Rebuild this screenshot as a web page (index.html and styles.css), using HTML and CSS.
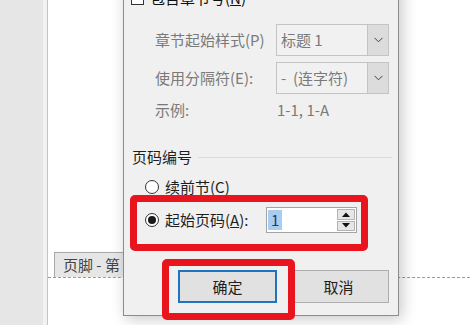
FILE: index.html
```html
<!DOCTYPE html>
<html lang="zh-CN">
<head>
  <meta charset="UTF-8">
  <meta name="viewport" content="width=device-width, initial-scale=1.0">
  <title>页码格式</title>
  <link rel="stylesheet" href="styles.css">
</head>
<body>
  <div class="desk">
    <div class="gutter"></div>
    <div class="gutter-edge"></div>
    <div class="page">
      <div class="footer-area">
        <div class="footer-tag">页脚 - 第 1 节 -</div>
      </div>
    </div>
  </div>

  <div class="dialog">
    <div class="check-row">
      <span class="checkbox"></span>
      <span>包含章节号(<u>N</u>)</span>
    </div>

    <div class="field-row">
      <span class="label">章节起始样式(P)</span>
      <div class="combo">
        <span class="combo-text">标题 1</span>
        <span class="combo-btn">
          <svg width="9" height="6" viewBox="0 0 9 6"><polyline points="0.5,0.8 4.5,4.8 8.5,0.8" fill="none" stroke="#444" stroke-width="1"/></svg>
        </span>
      </div>
    </div>

    <div class="field-row">
      <span class="label">使用分隔符(E):</span>
      <div class="combo">
        <span class="combo-text">-&nbsp;&nbsp;(连字符)</span>
        <span class="combo-btn">
          <svg width="9" height="6" viewBox="0 0 9 6"><polyline points="0.5,0.8 4.5,4.8 8.5,0.8" fill="none" stroke="#444" stroke-width="1"/></svg>
        </span>
      </div>
    </div>

    <div class="example-row">
      <span class="label">示例:</span>
      <span class="example-value">1-1, 1-A</span>
    </div>

    <div class="group-title">
      <span>页码编号</span>
      <span class="group-line"></span>
    </div>

    <div class="radio-row">
      <span class="radio"></span>
      <span>续前节(C)</span>
    </div>

    <div class="radio-row start-row">
      <span class="radio checked"></span>
      <span class="start-label">起始页码(<u>A</u>):</span>
      <div class="spinner">
        <span class="spin-value"><span class="selected">1</span></span>
        <span class="spin-btns">
          <span class="spin-btn">
            <svg width="8" height="5" viewBox="0 0 8 5"><polygon points="0,5 4,0.5 8,5" fill="#111"/></svg>
          </span>
          <span class="spin-btn">
            <svg width="8" height="5" viewBox="0 0 8 5"><polygon points="0,0 8,0 4,4.5" fill="#111"/></svg>
          </span>
        </span>
      </div>
    </div>

    <div class="button-row">
      <button class="btn btn-default">确定</button>
      <button class="btn">取消</button>
    </div>
  </div>

  <!-- red annotation frames -->
  <div class="mark mark-start"></div>
  <div class="mark mark-ok"></div>
</body>
</html>
```

FILE: styles.css
```css
body {
  margin: 0;
  width: 470px;
  height: 325px;
  overflow: hidden;
  position: relative;
  background: #fff;
  font-family: "Noto Sans CJK SC", "Noto Sans", sans-serif;
  font-size: 15px;
  color: #1e1e1e;
}

.desk {
  display: flex;
  height: 325px;
}

.gutter {
  width: 43px;
  background: #e6e6e6;
}

.gutter-edge {
  width: 4px;
  background: #f2f2f2;
  border-right: 1px solid #c4c4c4;
}

.page {
  flex: 1;
  background: #fff;
}

.footer-area {
  margin-top: 252px;
  height: 25px;
  border-bottom: 1px dashed #9a9a9a;
  padding-left: 6px;
}

.footer-tag {
  height: 25px;
  width: 120px;
  box-sizing: border-box;
  padding-left: 8px;
  background: #e6e6e6;
  border: 1px solid #a8a8a8;
  border-bottom: none;
  color: #444;
  line-height: 23px;
  white-space: nowrap;
}

/* dialog */
.dialog {
  position: absolute;
  left: 123px;
  top: -20px;
  width: 276px;
  box-sizing: border-box;
  padding: 7px 9px 12px 7px;
  background: #f0f0f0;
  border: 1px solid #8c8c8c;
  box-shadow: 3px 3px 14px rgba(0, 0, 0, 0.22);
  line-height: 20px;
}

.check-row {
  display: flex;
  align-items: center;
  gap: 6px;
  height: 20px;
  color: #111;
}

.checkbox {
  width: 11px;
  height: 11px;
  border: 1px solid #333;
  background: #fff;
}

.field-row {
  display: flex;
  align-items: center;
  height: 32px;
  margin-top: 16px;
}

.field-row + .field-row {
  margin-top: 6px;
}

.label {
  width: 121px;
  margin-left: 24px;
  color: #7a7a7a;
  white-space: nowrap;
}

.combo {
  display: flex;
  width: 113px;
  height: 32px;
  box-sizing: border-box;
  border: 1px solid #c4c4c4;
  background: #f1f1f1;
}

.combo-text {
  flex: 1;
  padding-left: 4px;
  line-height: 30px;
  color: #7a7a7a;
  white-space: nowrap;
}

.combo-btn {
  width: 20px;
  display: flex;
  align-items: center;
  justify-content: center;
  background: #dcdcdc;
  border-left: 1px solid #c4c4c4;
}

.example-row {
  display: flex;
  align-items: center;
  height: 20px;
  margin-top: 6px;
}

.example-value {
  margin-left: 1px;
  color: #7a7a7a;
}

.group-title {
  display: flex;
  align-items: center;
  height: 20px;
  margin-top: 27px;
  margin-left: 1px;
  margin-right: -3px;
  color: #1e1e1e;
}

.group-line {
  flex: 1;
  height: 1px;
  margin-left: 6px;
  background: #dadada;
}

.radio-row {
  display: flex;
  align-items: center;
  gap: 6px;
  height: 22px;
  margin-top: 9px;
  padding-left: 14px;
}

.start-row {
  height: 26px;
}

.radio {
  width: 12px;
  height: 12px;
  border: 1px solid #333;
  border-radius: 50%;
  background: #fff;
  display: flex;
  align-items: center;
  justify-content: center;
}

.radio.checked::after {
  content: "";
  width: 8px;
  height: 8px;
  border-radius: 50%;
  background: #1a1a1a;
}

.start-label {
  width: 95px;
  white-space: nowrap;
}

.spinner {
  display: flex;
  width: 91px;
  height: 26px;
  box-sizing: border-box;
  border: 1px solid #a3a3a3;
  background: #fff;
}

.spin-value {
  flex: 1;
  padding: 2px 0 2px 1px;
}

.selected {
  display: inline-block;
  height: 20px;
  padding: 0 3px;
  background: #a8cdf0;
  color: #1a3c6e;
  line-height: 20px;
}

.spin-btns {
  display: flex;
  flex-direction: column;
  width: 18px;
  padding: 1px;
  gap: 1px;
}

.spin-btn {
  flex: 1;
  display: flex;
  align-items: center;
  justify-content: center;
  background: #e6e6e6;
  border: 1px solid #b4b4b4;
}

.button-row {
  display: flex;
  gap: 11px;
  height: 33px;
  margin-top: 37px;
  padding-left: 47px;
}

.btn {
  width: 101px;
  height: 33px;
  box-sizing: border-box;
  background: #e1e1e1;
  border: 1px solid #adadad;
  font-family: inherit;
  font-size: 15px;
  color: #1e1e1e;
  padding: 0;
}

.btn-default {
  width: 99px;
  border: 2px solid #1f73c0;
}

/* annotation */
.mark {
  position: absolute;
  box-sizing: border-box;
  border: 7px solid #e8151f;
  border-radius: 5px;
}

.mark-start {
  left: 130px;
  top: 195px;
  width: 238px;
  height: 56px;
}

.mark-ok {
  left: 162px;
  top: 259px;
  width: 133px;
  height: 61px;
}
```
